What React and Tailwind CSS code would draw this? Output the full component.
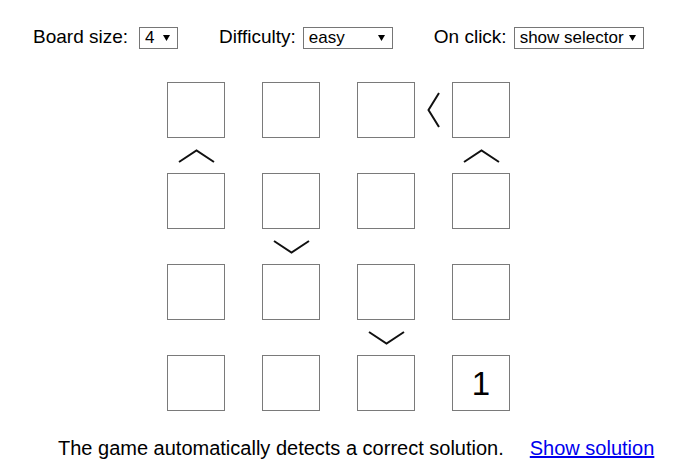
import { useState } from "react";

const SIZE = 4;

// constraints keyed by grid slot "row-col" in the 7x7 layout grid
const CONSTRAINTS = {
  "0-5": "left",
  "1-0": "up",
  "1-6": "up",
  "3-2": "down",
  "5-4": "down",
};

const VALUES = { "3-3": "1" };

const Chevron = ({ dir }) => {
  if (dir === "left" || dir === "right") {
    const pts = dir === "left" ? "12,1 1.5,18 12,35" : "1,1 11.5,18 1,35";
    return (
      <svg width="13" height="36" viewBox="0 0 13 36">
        <polyline points={pts} fill="none" stroke="#111" strokeWidth="2" />
      </svg>
    );
  }
  const pts = dir === "up" ? "1,13 18.5,1.5 36,13" : "1,1 18.5,12.5 36,1";
  return (
    <svg width="37" height="14" viewBox="0 0 37 14">
      <polyline points={pts} fill="none" stroke="#111" strokeWidth="2" />
    </svg>
  );
};

const Select = ({ value, options, onChange, width }) => (
  <div className="relative inline-block">
    <select
      value={value}
      onChange={(e) => onChange(e.target.value)}
      style={{ width }}
      className="block h-[22px] appearance-none rounded-none border border-[#767676] bg-white pl-[5px] pr-[18px] font-['Liberation_Sans',Arial,sans-serif] text-[17px] leading-[20px] text-black outline-none"
    >
      {options.map((o) => (
        <option key={o} value={o}>
          {o}
        </option>
      ))}
    </select>
    <svg
      className="pointer-events-none absolute right-[8px] top-[8px]"
      width="7"
      height="6"
      viewBox="0 0 7 6"
    >
      <polygon points="0,0 7,0 3.5,6" fill="#000" />
    </svg>
  </div>
);

const App = () => {
  const [boardSize, setBoardSize] = useState("4");
  const [difficulty, setDifficulty] = useState("easy");
  const [onClick, setOnClick] = useState("show selector");

  const slots = [];
  for (let r = 0; r < SIZE * 2 - 1; r++) {
    for (let c = 0; c < SIZE * 2 - 1; c++) {
      const key = `${r}-${c}`;
      if (r % 2 === 0 && c % 2 === 0) {
        const cellKey = `${r / 2}-${c / 2}`;
        slots.push(
          <div
            key={key}
            className="flex items-center justify-center border border-[#7a7a7a] bg-white text-[33px] leading-none text-black"
          >
            {VALUES[cellKey] || ""}
          </div>
        );
      } else if (CONSTRAINTS[key]) {
        slots.push(
          <div key={key} className="flex items-center justify-center">
            <Chevron dir={CONSTRAINTS[key]} />
          </div>
        );
      } else {
        slots.push(<div key={key} />);
      }
    }
  }

  return (
    <div className="w-[685px] bg-white pt-[26px] font-['Liberation_Sans',Arial,sans-serif] text-black">
      <div className="flex h-[22px] items-center pl-[33px] text-[19px]">
        <span>Board size:</span>
        <div className="ml-[11px]">
          <Select
            value={boardSize}
            onChange={setBoardSize}
            options={["4", "5", "6", "7"]}
            width={39}
          />
        </div>
        <span className="ml-[41px]">Difficulty:</span>
        <div className="ml-[7px]">
          <Select
            value={difficulty}
            onChange={setDifficulty}
            options={["easy", "normal", "hard"]}
            width={90}
          />
        </div>
        <span className="ml-[41px]">On click:</span>
        <div className="ml-[7px]">
          <Select
            value={onClick}
            onChange={setOnClick}
            options={["show selector", "cycle values"]}
            width={130}
          />
        </div>
      </div>

      <div className="ml-[167px] mt-[34px] grid w-max grid-cols-[58px_37px_58px_37px_58px_37px_58px] grid-rows-[56px_35px_56px_35px_56px_35px_56px]">
        {slots}
      </div>

      <div className="mt-[26px] flex items-baseline pl-[58px] text-[20px] leading-[23px]">
        <span>The game automatically detects a correct solution.</span>
        <a href="#" className="ml-[26px] text-[#0000ee] underline">
          Show solution
        </a>
      </div>
    </div>
  );
};

export default App;
